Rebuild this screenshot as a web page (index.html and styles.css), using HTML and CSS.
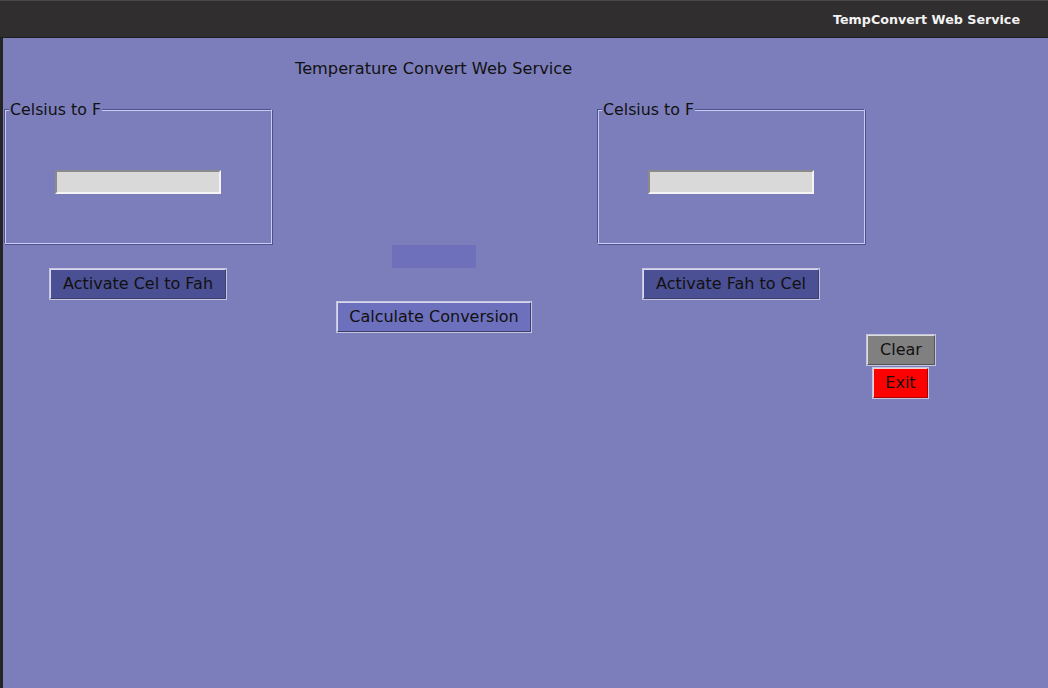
FILE: index.html
```html
<!DOCTYPE html>
<html>
<head>
<meta charset="utf-8">
<link rel="stylesheet" href="styles.css">
</head>
<body>
<div class="window">
  <header class="titlebar"><span class="title">TempConvert Web Service</span></header>
  <div class="body">
    <div class="edge"></div>
    <main class="canvas">
      <div class="heading">Temperature Convert Web Service</div>
      <fieldset class="group group-left">
        <legend>Celsius to F</legend>
        <input class="entry" type="text">
      </fieldset>
      <fieldset class="group group-right">
        <legend>Celsius to F</legend>
        <input class="entry" type="text">
      </fieldset>
      <div class="result"></div>
      <button class="btn btn-dark btn-cel">Activate Cel to Fah</button>
      <button class="btn btn-dark btn-fah">Activate Fah to Cel</button>
      <button class="btn btn-calc">Calculate Conversion</button>
      <button class="btn btn-clear">Clear</button>
      <button class="btn btn-exit">Exit</button>
    </main>
  </div>
</div>
</body>
</html>
```

FILE: styles.css
```css
* { box-sizing: border-box; }
html, body { margin: 0; padding: 0; }
body {
  width: 1048px;
  height: 688px;
  overflow: hidden;
  font-family: "DejaVu Sans", sans-serif;
  background: #7c7ebc;
}
.window {
  display: flex;
  flex-direction: column;
  width: 1048px;
  height: 688px;
}
.titlebar {
  height: 38px;
  flex: none;
  background: #302e2e;
  border-top: 1px solid #4a4848;
  border-bottom: 1px solid #1f1e1e;
  display: flex;
  align-items: center;
  justify-content: flex-end;
  padding-right: 28px;
}
.title {
  color: #f2f2f2;
  font-weight: bold;
  font-size: 12.7px;
}
.body {
  flex: 1;
  display: flex;
}
.edge {
  width: 3px;
  background: #262525;
  flex: none;
}
.canvas {
  position: relative;
  flex: 1;
  background: #7c7ebc;
  color: #111;
  font-size: 16px;
}
.heading {
  position: absolute;
  left: 292px;
  top: 20px;
  line-height: 22px;
  font-size: 16.2px;
}
.group {
  position: absolute;
  margin: 0;
  padding: 0;
  width: 268px;
  height: 135px;
  top: 71px;
  border-style: solid;
  border-width: 1px;
  border-color: #4f5090 #c9cbf2 #c9cbf2 #4f5090;
  box-shadow: inset 1px 1px 0 #c9cbf2, 1px 1px 0 #4f5090;
}
.group-left { left: 1px; }
.group-right { left: 594px; }
.group legend {
  position: absolute;
  top: -10px;
  left: 4px;
  padding: 0 1px;
  font-size: 15.8px;
  line-height: 20px;
  color: #111;
  background: #7c7ebc;
}
.entry {
  position: absolute;
  left: 50px;
  top: 60px;
  width: 166px;
  height: 24px;
  background: #d9d9d9;
  border: 2px solid;
  border-color: #8a8a8a #f4f4f4 #f4f4f4 #8a8a8a;
  padding: 0;
  outline: none;
}
.result {
  position: absolute;
  left: 389px;
  top: 207px;
  width: 84px;
  height: 23px;
  background: #6e70bb;
}
.btn {
  position: absolute;
  font-family: "DejaVu Sans", sans-serif;
  font-size: 16px;
  color: #111;
  padding: 0;
  border: 1px solid;
  border-color: #d8d9ee #3e3f6e #3e3f6e #d8d9ee;
  box-shadow: 0 0 0 1px #c4c5df;
  height: 30px;
  line-height: 28px;
  cursor: default;
}
.btn-dark { background: #4b4f94; width: 176px; top: 231px; }
.btn-cel { left: 47px; }
.btn-fah { left: 640px; }
.btn-calc {
  background: #6d70bd;
  left: 334px;
  top: 264px;
  width: 194px;
}
.btn-clear {
  background: #808080;
  left: 864px;
  top: 297px;
  width: 68px;
  border-color: #dcdcdc #555 #555 #dcdcdc;
}
.btn-exit {
  background: #ff0000;
  left: 870px;
  top: 330px;
  width: 55px;
  border-color: #f0d0d0 #a00 #a00 #f0d0d0;
}
```
